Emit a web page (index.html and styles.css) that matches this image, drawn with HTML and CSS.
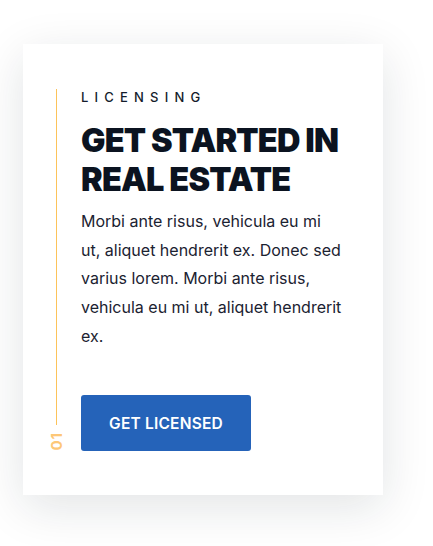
FILE: index.html
```html
<!DOCTYPE html>
<html lang="en">
<head>
<meta charset="utf-8">
<title>Licensing</title>
<link rel="stylesheet" href="styles.css">
</head>
<body>
  <main class="page">
    <article class="card">
      <div class="rail">
        <span class="rail-line"></span>
        <span class="rail-num">01</span>
      </div>
      <div class="content">
        <p class="eyebrow">LICENSING</p>
        <h2 class="title">GET STARTED IN REAL ESTATE</h2>
        <p class="text">Morbi ante risus, vehicula eu mi ut, aliquet hendrerit ex. Donec sed varius lorem. Morbi ante risus, vehicula eu mi ut, aliquet hendrerit ex.</p>
        <a class="btn" href="#">GET LICENSED</a>
      </div>
    </article>
  </main>
</body>
</html>
```
FILE: styles.css
```css
* { box-sizing: border-box; }
html, body { margin: 0; padding: 0; background: #ffffff; }
body { font-family: "Inter", "Liberation Sans", sans-serif; }

.page {
  padding: 44px 0 51px 23px;
  min-height: 546px;
}

.card {
  width: 360px;
  height: 451px;
  background: #ffffff;
  box-shadow: 0 12px 45px rgba(20, 30, 40, 0.12);
  display: grid;
  grid-template-columns: 16px 1fr;
  column-gap: 17px;
  padding: 45px 30px 44px 25px;
}

.rail {
  display: flex;
  flex-direction: column;
  align-items: center;
}
.rail-line {
  flex: 1;
  width: 1px;
  background: #fcc35a;
}
.rail-num {
  writing-mode: vertical-rl;
  transform: rotate(180deg);
  margin-top: 7px;
  font-family: "Inter", sans-serif;
  font-weight: 700;
  font-size: 15px;
  line-height: 1;
  letter-spacing: 1px;
  color: #fdc777;
}

.content {
  display: flex;
  flex-direction: column;
  align-items: flex-start;
}

.eyebrow {
  margin: 0;
  font-family: "Inter", sans-serif;
  font-weight: 500;
  font-size: 13px;
  line-height: 16px;
  letter-spacing: 6.2px;
  color: #141c2b;
}

.title {
  margin: 17px 0 0;
  font-family: "Inter", sans-serif;
  font-weight: 900;
  font-size: 32.5px;
  line-height: 38.5px;
  letter-spacing: -0.8px;
  color: #0b1320;
  width: 275px;
}

.text {
  margin: 8px 0 0;
  font-family: "Inter", sans-serif;
  font-size: 16px;
  line-height: 28.7px;
  color: #1b2231;
  width: 262px;
}

.btn {
  margin-top: auto;
  width: 170px;
  height: 56px;
  display: flex;
  align-items: center;
  justify-content: center;
  background: #2563b9;
  border-radius: 3px;
  color: #ffffff;
  text-decoration: none;
  font-family: "Inter", sans-serif;
  font-weight: 600;
  font-size: 15.5px;
  letter-spacing: 0.2px;
}
```
